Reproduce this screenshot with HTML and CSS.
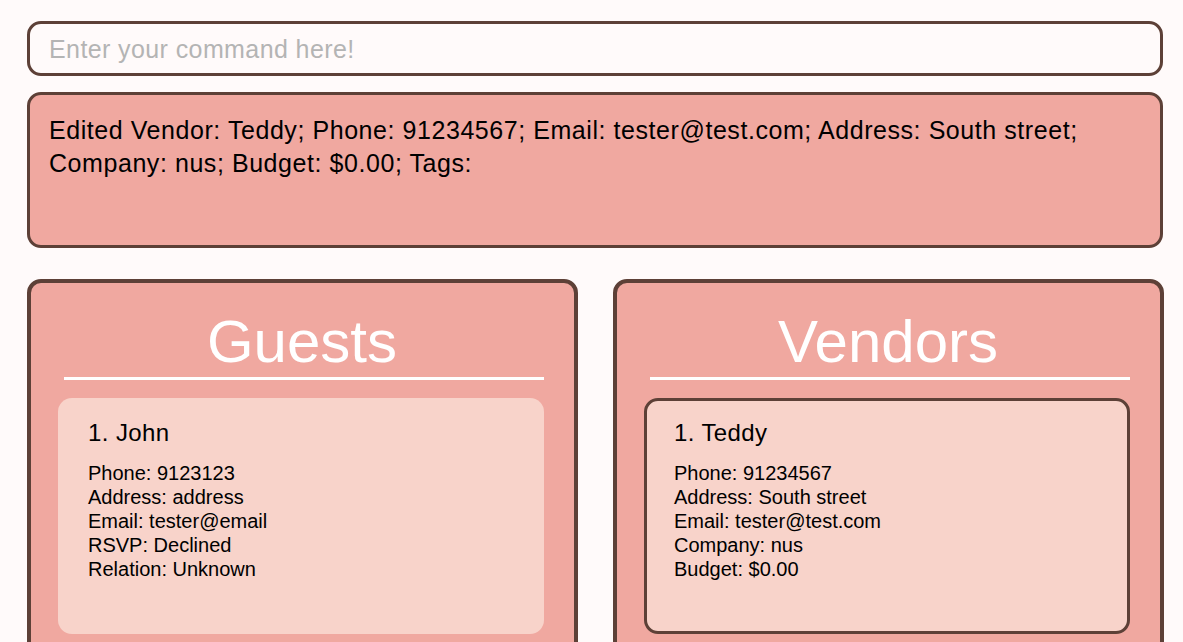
FILE: index.html
```html
<!DOCTYPE html>
<html lang="en">
<head>
<meta charset="utf-8">
<title>Address Book</title>
<link rel="stylesheet" href="styles.css">
</head>
<body>
<div class="app">
  <div class="command-box">
    <input class="command-input" type="text" placeholder="Enter your command here!">
  </div>
  <div class="result-box">Edited Vendor: Teddy; Phone: 91234567; Email: tester@test.com; Address: South street; Company: nus; Budget: $0.00; Tags:</div>
  <div class="panels">
    <section class="panel">
      <h1 class="panel-title">Guests</h1>
      <div class="card">
        <div class="card-name">1. John</div>
        <div class="card-line">Phone: 9123123</div>
        <div class="card-line">Address: address</div>
        <div class="card-line">Email: tester@email</div>
        <div class="card-line">RSVP: Declined</div>
        <div class="card-line">Relation: Unknown</div>
      </div>
    </section>
    <section class="panel">
      <h1 class="panel-title">Vendors</h1>
      <div class="card card-selected">
        <div class="card-name">1. Teddy</div>
        <div class="card-line">Phone: 91234567</div>
        <div class="card-line">Address: South street</div>
        <div class="card-line">Email: tester@test.com</div>
        <div class="card-line">Company: nus</div>
        <div class="card-line">Budget: $0.00</div>
      </div>
    </section>
  </div>
</div>
</body>
</html>
```
FILE: styles.css
```css
* { box-sizing: border-box; }
html, body {
  margin: 0;
  height: 642px;
  overflow: hidden;
  background: #fffafa;
  font-family: "Liberation Sans", Arial, sans-serif;
  color: #000;
}
.app {
  padding: 21px 19px 0 27px;
  display: flex;
  flex-direction: column;
}
.command-box {
  height: 55px;
  margin-right: 1px;
  border: 3px solid #5d4037;
  border-radius: 14px;
  background: #fffafa;
  display: flex;
  align-items: center;
  padding: 0 17px 0 19px;
}
.command-input {
  width: 100%;
  border: none;
  outline: none;
  background: transparent;
  font-family: "Liberation Sans", Arial, sans-serif;
  font-size: 25px;
  letter-spacing: 0.4px;
  color: #000;
  padding: 0;
  margin-top: 2px;
}
.command-input::placeholder { color: #b4b4b4; }
.result-box {
  margin-top: 16px;
  margin-right: 1px;
  height: 156px;
  border: 3px solid #5d4037;
  border-radius: 14px;
  background: #f0a8a0;
  padding: 19px 30px 0 19px;
  font-size: 25px;
  letter-spacing: 0.56px;
  line-height: 33px;
}
.panels {
  margin-top: 31px;
  display: grid;
  grid-template-columns: 1fr 1fr;
  gap: 35px;
}
.panel {
  height: 400px;
  border: 4px solid #5d4037;
  border-radius: 14px;
  background: #f0a8a0;
  padding: 24px 30px 0 27px;
}
.panel-title {
  margin: 0 0 18px 6px;
  font-weight: normal;
  font-size: 60px;
  line-height: 69px;
  color: #fff;
  text-align: center;
  padding: 0 4px 1px 0;
  border-bottom: 3px solid #fff;
}
.card {
  height: 236px;
  border: 3px solid transparent;
  border-radius: 14px;
  background: #f8d3ca;
  padding: 18px 20px 0 27px;
}
.card-selected { border-color: #5d4037; }
.card-name {
  font-size: 24px;
  letter-spacing: 0.4px;
  line-height: 28px;
  margin-bottom: 14px;
}
.card-line {
  font-size: 20px;
  line-height: 24px;
}
```
